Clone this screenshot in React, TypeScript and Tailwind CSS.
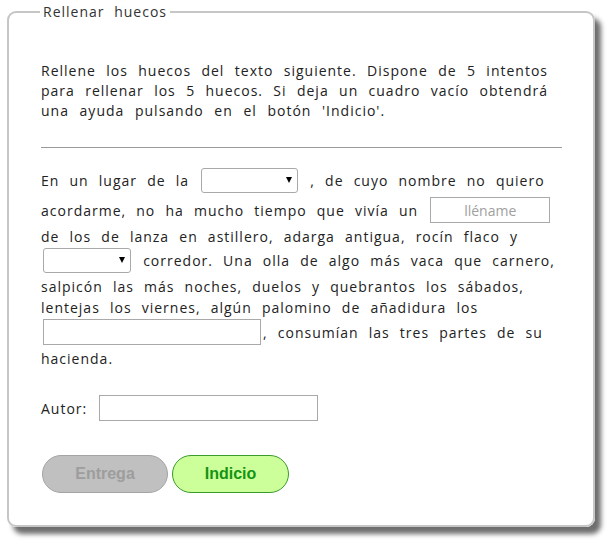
import React from "react";

function FakeSelect({ w }: { w: number }) {
  return (
    <span className="relative inline-block mx-[2px] mt-[1px] mb-[3px] tracking-normal [word-spacing:0px]" style={{ width: w }}>
      <select className="appearance-none inline-block align-baseline w-full h-[25px] bg-white border border-[#a9a9a9] rounded-[3px] text-[14px] px-1 outline-none">
        <option></option>
      </select>
      <span className="pointer-events-none absolute right-[6px] top-[9px] w-0 h-0 border-l-[3.5px] border-r-[3.5px] border-t-[6px] border-l-transparent border-r-transparent border-t-black" />
    </span>
  );
}

export default function App() {
  const textStyle =
    "font-['Open_Sans','Noto_Sans',sans-serif] text-[14px] text-[#222] tracking-[1px] [word-spacing:5.5px]";
  const justLine = "block text-justify [text-align-last:justify]";
  return (
    <div className="bg-white w-[615px] h-[545px] pt-[3px]">
      <fieldset className="ml-[7px] w-[588px] h-[524px] border-2 border-[#c6c6c6] rounded-[9px] shadow-[6px_7px_5px_#6e6e6e] pl-[32px] pr-[31px] bg-white">
        <legend className={`${textStyle} ml-[-1px] px-[3px] text-[#333] leading-[18px] [word-spacing:5px]`}>
          Rellenar huecos
        </legend>
        <p className={`${textStyle} mt-[40px] mr-[14px] leading-[20px] whitespace-nowrap [word-spacing:3px]`}>
          <span className={justLine}>Rellene los huecos del texto siguiente. Dispone de 5 intentos</span>
          <span className={justLine}>para rellenar los 5 huecos. Si deja un cuadro vacío obtendrá</span>
          <span className="block [word-spacing:6px]">una ayuda pulsando en el botón 'Indicio'.</span>
        </p>
        <hr className="mt-[26px] border-0 border-t border-[#9a9a9a]" />
        <p className={`${textStyle} mt-[19px] leading-[21px] whitespace-nowrap`}>
          En un lugar de la <FakeSelect w={97} /> , de cuyo nombre no quiero
          <br />
          acordarme, no ha mucho tiempo que vivía un{" "}
          <input
            placeholder="lléname"
            className="mt-[1px] mb-[3px] mx-[2px] w-[120px] h-[26px] border border-[#a9a9a9] text-center placeholder:text-[#a0a0a0] text-[14px] outline-none tracking-normal"
          />
          <br />
          de los de lanza en astillero, adarga antigua, rocín flaco y
          <br />
          <FakeSelect w={88} /> corredor. Una olla de algo más vaca que carnero,
          <br />
          salpicón las más noches, duelos y quebrantos los sábados,
          <br />
          lentejas los viernes, algún palomino de añadidura los
          <br />
          <input className="mt-[1px] mb-[3px] mx-[2px] w-[218px] h-[26px] border border-[#a9a9a9] outline-none" />
          , consumían las tres partes de su
          <br />
          hacienda.
        </p>
        <div className={`${textStyle} mt-[26px] flex items-center gap-[12px]`}>
          <span>Autor:</span>
          <input className="w-[219px] h-[26px] border border-[#a9a9a9] outline-none" />
        </div>
        <div className="mt-[34px] flex gap-[4px] ml-[1px] font-['Liberation_Sans',Arial,sans-serif] font-bold text-[16px]">
          <button className="w-[126px] h-[38px] rounded-full bg-[#c0c0c0] border border-[#a4a4a4] text-[#9d9d9d]">
            Entrega
          </button>
          <button className="w-[117px] h-[38px] rounded-full bg-[#ccff99] border border-[#3a9a2a] text-[#139413]">
            Indicio
          </button>
        </div>
      </fieldset>
    </div>
  );
}
